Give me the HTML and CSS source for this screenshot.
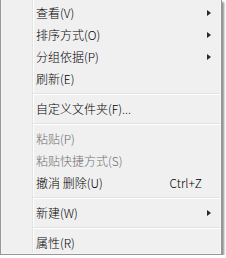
FILE: index.html
```html
<!doctype html>
<html lang="zh-CN">
  <head>
    <meta charset="UTF-8" />
    <link rel="stylesheet" href="styles.css">
  </head>
  <body>
    <div class="menu">
      <div class="menu__item">查看(V)<span class="menu__arrow"></span></div>
      <div class="menu__item">排序方式(O)<span class="menu__arrow"></span></div>
      <div class="menu__item">分组依据(P)<span class="menu__arrow"></span></div>
      <div class="menu__item">刷新(E)</div>
      <div class="menu__sep"></div>
      <div class="menu__item">自定义文件夹(F)...</div>
      <div class="menu__sep"></div>
      <div class="menu__item is-disabled">粘贴(P)</div>
      <div class="menu__item is-disabled">粘贴快捷方式(S)</div>
      <div class="menu__item">撤消 删除(U)<span class="menu__key">Ctrl+Z</span></div>
      <div class="menu__sep"></div>
      <div class="menu__item">新建(W)<span class="menu__arrow"></span></div>
      <div class="menu__sep"></div>
      <div class="menu__item">属性(R)</div>
    </div>
  </body>
</html>
```

FILE: styles.css
```css
body {
  margin: 0;
  background: #fff;
  font-family: "Noto Sans CJK SC", "Noto Sans", sans-serif;
  font-size: 12px;
  font-weight: 300;
  color: #000;
}

.menu {
  display: flex;
  flex-direction: column;
  box-sizing: border-box;
  width: 222px;
  height: 255px;
  padding-top: 2px;
  border: 1px solid #979797;
  border-top: 0;
  background:
    linear-gradient(to right, transparent 31px, #e2e3e3 31px 32px, #fff 32px 33px, transparent 33px),
    #f0f0f0;
  box-shadow: inset 1px 0 0 #f5f5f5, inset -1px -1px 0 #f5f5f5, 2px 2px 2px rgba(0, 0, 0, 0.45);
}

.menu__item {
  display: flex;
  align-items: center;
  height: 22px;
  padding-left: 35px;
  padding-right: 10px;
  white-space: nowrap;
  line-height: 1;
}

.menu__item.is-disabled {
  color: #6d6d6d;
}

.menu__arrow {
  margin-left: auto;
  margin-right: 0;
  width: 0;
  height: 0;
  border-top: 3.5px solid transparent;
  border-bottom: 3.5px solid transparent;
  border-left: 4px solid #2a2a2a;
}

.menu__key {
  margin-left: auto;
  margin-right: 9px;
}

.menu__sep {
  height: 8px;
  margin-left: 32px;
  margin-right: 1px;
  background:
    linear-gradient(#e2e3e3, #e2e3e3) 0 3px / 100% 1px no-repeat,
    linear-gradient(#fff, #fff) 0 4px / 100% 1px no-repeat;
}
```
